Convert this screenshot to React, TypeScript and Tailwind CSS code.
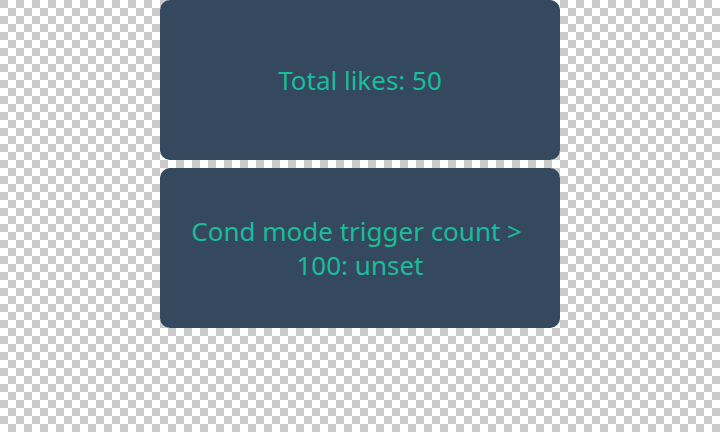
import React from "react";

function Card({ children }: { children: React.ReactNode }) {
  return (
    <div className="flex h-[160px] w-[400px] items-center justify-center rounded-[10px] bg-[#34495e] px-6 pb-px text-center">
      <p className="font-['Noto_Sans',sans-serif] text-[26px] leading-[34px] text-[#1abc9c]">{children}</p>
    </div>
  );
}

export default function App() {
  return (
    <div className="flex h-[432px] w-[720px] flex-col items-center gap-2 bg-[conic-gradient(#fff_25%,#cbcbcb_0_50%,#fff_0_75%,#cbcbcb_0)] bg-[length:16px_16px]">
      <Card>Total likes: 50</Card>
      <Card>{"Cond mode trigger count >\u00a0 100: unset"}</Card>
    </div>
  );
}
